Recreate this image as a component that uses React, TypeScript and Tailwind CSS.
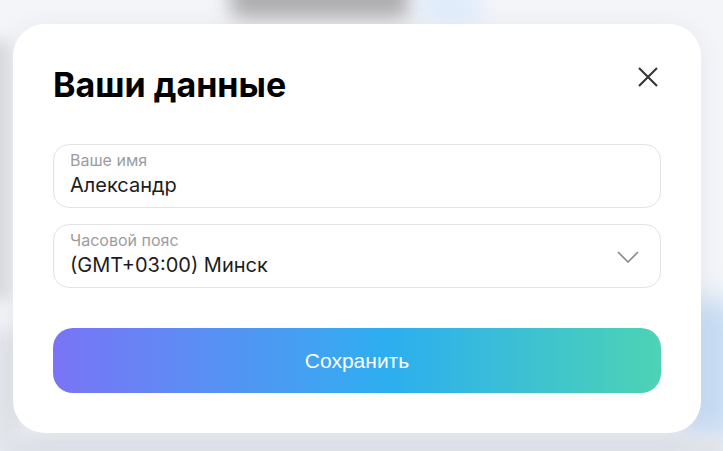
import React from "react";

export default function App() {
  return (
    <div className="relative w-[723px] h-[451px] overflow-hidden bg-[#f4f5f9]" style={{ fontFamily: "Inter, 'Noto Sans', sans-serif" }}>
      {/* blurred backdrop */}
      <div className="absolute left-[230px] top-[-20px] w-[180px] h-[38px] rounded-[10px] bg-[#9a9a9c] blur-[10px] opacity-80" />
      <div className="absolute left-[420px] top-[-10px] w-[60px] h-[30px] bg-[#dcebfb] blur-[10px]" />
      <div className="absolute left-[-14px] top-[40px] w-[22px] h-[260px] bg-[#c9c9cc] blur-[8px] opacity-70" />
      <div className="absolute left-[-10px] top-[330px] w-[30px] h-[120px] bg-[#d8dbe2] blur-[10px] opacity-70" />
      <div className="absolute right-[-20px] top-[300px] w-[60px] h-[140px] bg-[#bcd6f2] blur-[14px] opacity-80" />
      <div className="absolute left-[0px] bottom-[-10px] w-[723px] h-[24px] bg-[#dfe2e8] blur-[6px]" />

      <div className="relative ml-[13px] mt-[24px] w-[688px] h-[409px] rounded-[32px] bg-white shadow-[0_4px_24px_rgba(60,70,100,0.08)] px-[40px] pt-[40px] flex flex-col">
        <div className="flex items-start justify-between">
          <h1 className="text-[34px] leading-[41px] font-bold text-black">Ваши данные</h1>
          <button className="mt-[2px] mr-[2px] w-[22px] h-[22px] flex items-center justify-center text-[#333]">
            <svg width="22" height="22" viewBox="0 0 22 22" fill="none" stroke="currentColor" strokeWidth="2" strokeLinecap="butt">
              <path d="M2 2L20 20M20 2L2 20" />
            </svg>
          </button>
        </div>

        <div className="mt-[39px] flex flex-col gap-[16px]">
          <div className="h-[64px] rounded-[16px] border border-[#e3e3e6] px-[16px] pt-[6px]">
            <div className="text-[16px] leading-[19px] text-[#9c9c9e]">Ваше имя</div>
            <div className="mt-[3px] text-[20px] leading-[24px] text-[#1c1c1e]">Александр</div>
          </div>
          <div className="h-[64px] rounded-[16px] border border-[#e3e3e6] pl-[16px] pr-[21px] pt-[6px] flex items-start justify-between">
            <div>
              <div className="text-[16px] leading-[19px] text-[#9c9c9e]">Часовой пояс</div>
              <div className="mt-[3px] text-[20px] leading-[24px] text-[#1c1c1e]">(GMT+03:00) Минск</div>
            </div>
            <svg className="mt-[20px]" width="22" height="12" viewBox="0 0 22 12" fill="none" stroke="#888" strokeWidth="1.6">
              <path d="M1 1L11 11L21 1" />
            </svg>
          </div>
        </div>

        <button
          className="mt-[40px] h-[65px] w-full rounded-[20px] text-white text-[21px] bg-[linear-gradient(90deg,#7a74f6_0%,#3fa4f2_45%,#2caef0_55%,#4dd3b4_100%)]"
          style={{ fontFamily: "'Liberation Sans', Arial, sans-serif" }}
        >
          Сохранить
        </button>
      </div>
    </div>
  );
}
